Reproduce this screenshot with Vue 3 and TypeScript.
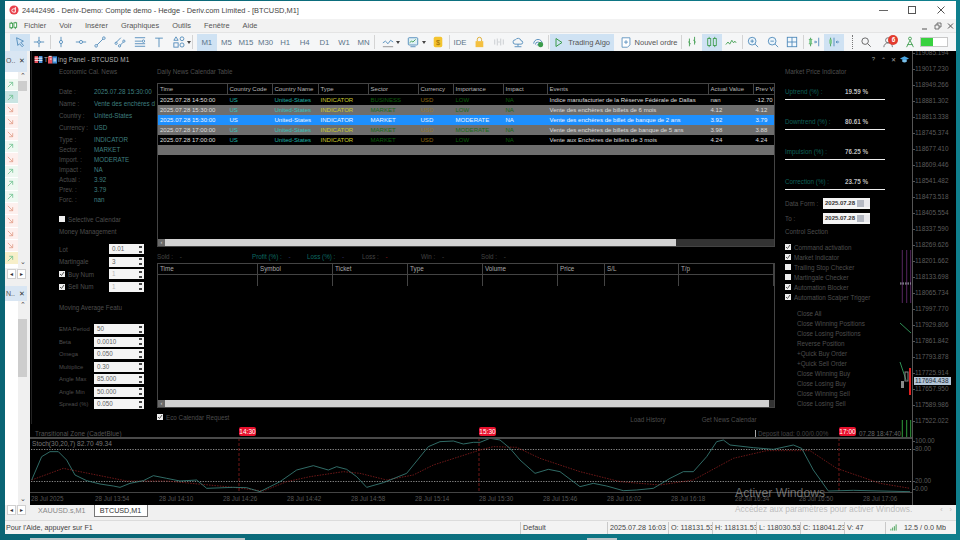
<script setup lang="ts">
const menus = ['Fichier', 'Voir', 'Insérer', 'Graphiques', 'Outils', 'Fenêtre', 'Aide']
const periods = ['M1', 'M5', 'M15', 'M30', 'H1', 'H4', 'D1', 'W1', 'MN']
const dockRows = ['u', 'us', 'd', 'd', 'd', 'u', 'd', 'u', 'u', 'u', 'd', 'd', 'd', 'd', 'uy']

const infoA = [['Date :', '2025.07.28 15:30:00'], ['Name :', 'Vente des enchères d'], ['Country :', 'United-States'], ['Currency :', 'USD']]
const infoB = [['Type :', 'INDICATOR'], ['Sector :', 'MARKET'], ['Import. :', 'MODERATE'], ['Impact :', 'NA'], ['Actual :', '3.92'], ['Prev. :', '3.79'], ['Forc. :', 'nan']]
const money = [
  { label: 'Lot', value: '0.01', check: false, dim: false },
  { label: 'Martingale', value: '3', check: false, dim: false },
  { label: 'Buy Num', value: '1', check: true, dim: true },
  { label: 'Sell Num', value: '1', check: true, dim: true },
]
const ma = [['EMA Period', '50'], ['Beta', '0.0010'], ['Omega', '0.050'], ['Multiplice', '0.30'], ['Angle Max', '85.000'], ['Angle Min', '50.000'], ['Spread (%)', '0.050']]

const newsHead = ['Time', 'Country Code', 'Country Name', 'Type', 'Sector', 'Currency', 'Importance', 'Impact', 'Events', 'Actual Value', 'Prev Val']
const news = [
  { cls: 'black', c: ['2025.07.28 14:50:00', 'US', 'United-States', 'INDICATOR', 'BUSINESS', 'USD', 'LOW', 'NA', 'Indice manufacturier de la Réserve Fédérale de Dallas', 'nan', '-12.70'], imp: 'low' },
  { cls: 'gray', c: ['2025.07.28 15:30:00', 'US', 'United-States', 'INDICATOR', 'MARKET', 'USD', 'LOW', 'NA', 'Vente des enchères de billets de 6 mois', '4.12', '4.12'], imp: 'low' },
  { cls: 'blue', c: ['2025.07.28 15:30:00', 'US', 'United-States', 'INDICATOR', 'MARKET', 'USD', 'MODERATE', 'NA', 'Vente des enchères de billet de banque de 2 ans', '3.92', '3.79'], imp: 'mod' },
  { cls: 'gray', c: ['2025.07.28 17:00:00', 'US', 'United-States', 'INDICATOR', 'MARKET', 'USD', 'MODERATE', 'NA', 'Vente des enchères de billets de banque de 5 ans', '3.98', '3.88'], imp: 'mod' },
  { cls: 'black', c: ['2025.07.28 17:00:00', 'US', 'United-States', 'INDICATOR', 'MARKET', 'USD', 'LOW', 'NA', 'Vente aux Enchères de billets de 3 mois', '4.24', '4.24'], imp: 'low' },
]
const colCls = ['time', 'cc', 'cc', 'ty', 'se', 'cu', 'im', 'ip', 'ev', 'ev', 'ev']
const summary = [
  { t: 'Sold :', v: '-', c: 'grey' }, { t: 'Profit (%) :', v: '-', c: 'teal' }, { t: 'Loss (%) :', v: '-', c: 'teal' },
  { t: 'Loss :', v: '-', c: 'red' }, { t: 'Win :', v: '-', c: 'grey' }, { t: 'Sold :', v: '-', c: 'grey' },
]
const orderHead = ['Time', 'Symbol', 'Ticket', 'Type', 'Volume', 'Price', 'S/L', 'T/p']

const metrics = [['Uptrend (%) :', '19.59 %'], ['Downtrend (%) :', '80.61 %'], ['Impulsion (%) :', '76.25 %'], ['Correction (%) :', '23.75 %']]
const checks: [string, boolean][] = [['Command activation', true], ['Market Indicator', true], ['Trailing Stop Checker', false], ['Martingale Checker', false], ['Automation Blocker', true], ['Automation Scalper Trigger', true]]
const actions = ['Close All', 'Close Winning Positions', 'Close Losing Positions', 'Reverse Position', '+Quick Buy Order', '+Quick Sell Order', 'Close Winning Buy', 'Close Losing Buy', 'Close Winning Sell', 'Close Losing Sell']

const prices = ['119085.194', '119017.230', '118949.266', '118881.302', '118813.338', '118745.374', '118677.410', '118609.446', '118541.482', '118473.518', '118405.554', '118337.590', '118269.626', '118201.662', '118133.698', '118065.734', '117997.770', '117929.806', '117861.842', '117793.878', '117725.914', '117657.950', '117589.986', '117522.022']
const times = ['28 Jul 2025', '28 Jul 13:54', '28 Jul 14:10', '28 Jul 14:26', '28 Jul 14:42', '28 Jul 14:58', '28 Jul 15:14', '28 Jul 15:30', '28 Jul 15:46', '28 Jul 16:02', '28 Jul 16:18', '28 Jul 16:34', '28 Jul 16:50', '28 Jul 17:06']

const toPts = (a: number[][], ox: number) => a.map(([x, y]) => `${ox + x / 3},${410 + y / 3}`).join(' ')
const greenLine = toPts([[95, 210], [125, 140], [150, 125], [175, 125], [200, 150], [225, 195], [260, 212], [300, 222], [340, 228], [360, 232], [390, 220], [430, 212], [460, 197], [500, 205], [540, 213], [590, 210], [620, 235], [700, 232], [740, 233], [780, 245], [840, 215], [890, 180], [940, 167], [985, 180], [1010, 170], [1040, 178], [1070, 200], [1100, 232], [1150, 218], [1220, 190], [1285, 110], [1320, 95], [1360, 93], [1390, 102], [1420, 97], [1440, 97]], 0)
  + ' ' + toPts([[30, 85], [60, 90], [90, 115], [120, 150], [165, 190], [205, 178], [240, 185], [300, 230], [340, 220], [380, 228], [430, 242], [470, 240], [520, 235], [570, 205], [610, 185], [640, 185], [680, 140], [710, 95], [730, 90], [750, 105], [820, 113], [880, 118], [940, 105], [965, 115], [1000, 180], [1045, 243], [1120, 241], [1290, 245]], 480)
const redLine = toPts([[95, 210], [190, 175], [250, 187], [380, 213], [500, 213], [700, 232], [790, 243], [860, 215], [930, 200], [1030, 185], [1080, 190], [1160, 210], [1240, 195], [1300, 165], [1440, 120]], 0)
  + ' ' + toPts([[40, 110], [110, 112], [180, 145], [300, 185], [420, 215], [540, 225], [640, 210], [760, 145], [860, 122], [990, 122], [1070, 175], [1200, 220], [1290, 235]], 480)
</script>

<template>
  <div class="desk">
    <div class="win">
      <header class="titlebar">
        <svg class="applogo" viewBox="0 0 12 12"><circle cx="6" cy="6" r="5.5" fill="#e8404a" /><path d="M7.6 2.6v6H5.4a2 2 0 1 1 0-4h2" fill="none" stroke="#fff" stroke-width="1.2" /></svg>
        <span class="wintitle">24442496 - Deriv-Demo: Compte demo - Hedge - Deriv.com Limited - [BTCUSD,M1]</span>
        <div class="winbtns">
          <svg viewBox="0 0 29 12"><path d="M10 6.5h9" stroke="#666" /></svg>
          <svg viewBox="0 0 29 12"><rect x="10.500" y="2.500" width="7" height="7" fill="none" stroke="#555" /></svg>
          <svg viewBox="0 0 29 12"><path d="M10.500 2.500l7 7m0-7l-7 7" stroke="#555" /></svg>
        </div>
      </header>

      <nav class="menubar">
        <svg class="mtlogo" viewBox="0 0 10 10"><path d="M2.500 1v8M7 1v8" stroke="#3a9b4a" /><rect x="1" y="2.500" width="3" height="5" fill="#fff" stroke="#3a9b4a" /><rect x="5.500" y="2" width="3" height="5" fill="#fff" stroke="#3a9b4a" /></svg>
        <span v-for="m in menus" :key="m">{{ m }}</span>
        <div class="mdibtns">
          <svg viewBox="0 0 36 10"><path d="M3 8h5" stroke="#555" /><path d="M16 4h4v4h-4zM18 4V2h4v4h-2" fill="none" stroke="#555" stroke-width=".8" /><path d="M29 2.500l5 5m0-5l-5 5" stroke="#555" /></svg>
        </div>
      </nav>

      <div class="toolbar">
        <button class="tb on"><svg viewBox="0 0 14 14"><path d="M3 2l8 4-3 1.500L11 11l-1.500 1.500L6.500 9 4.500 11z" fill="none" stroke="#4a86b8" /></svg></button>
        <button class="tb"><svg viewBox="0 0 14 14"><path d="M7 1v12M1 7h12" stroke="#4a86b8" /><circle cx="7" cy="7" r="1.500" fill="#fff" stroke="#4a86b8" /></svg></button>
        <i class="sep"></i>
        <button class="tb"><svg viewBox="0 0 14 14"><path d="M7 1v12" stroke="#4a86b8" /><circle cx="7" cy="7" r="1.800" fill="#fff" stroke="#4a86b8" /></svg></button>
        <button class="tb"><svg viewBox="0 0 14 14"><path d="M1 7h12" stroke="#4a86b8" /><circle cx="7" cy="7" r="1.800" fill="#fff" stroke="#4a86b8" /></svg></button>
        <button class="tb"><svg viewBox="0 0 14 14"><path d="M3 11L11 3" stroke="#4a86b8" /><circle cx="2.500" cy="11.500" r="1.500" fill="#fff" stroke="#4a86b8" /><circle cx="11.500" cy="2.500" r="1.500" fill="#fff" stroke="#4a86b8" /></svg></button>
        <button class="tb"><svg viewBox="0 0 14 14"><path d="M2 8l6-6M6 12l6-6" stroke="#4a86b8" /><circle cx="2.500" cy="8.500" r="1.300" fill="#fff" stroke="#4a86b8" /><circle cx="6.500" cy="11.500" r="1.300" fill="#fff" stroke="#4a86b8" /><circle cx="11.500" cy="6" r="1.300" fill="#fff" stroke="#4a86b8" /></svg></button>
        <button class="tb"><svg viewBox="0 0 14 14"><path d="M1 2h12M1 6h8M1 9h12M1 12h12" stroke="#4a86b8" /><circle cx="11" cy="6" r="1.400" fill="#fff" stroke="#4a86b8" /></svg></button>
        <button class="tb"><svg viewBox="0 0 14 14"><path d="M2.500 2.500h9M7 2.500V13" fill="none" stroke="#4a86b8" /></svg></button>
        <button class="tb"><svg viewBox="0 0 14 14"><path d="M3.500 1L6 5H1z" fill="none" stroke="#4a86b8" /><circle cx="10.500" cy="3.200" r="2.200" fill="none" stroke="#4a86b8" /><rect x="1" y="8" width="5" height="5" fill="none" stroke="#4a86b8" /><circle cx="10.500" cy="10.500" r="2.400" fill="none" stroke="#4a86b8" /></svg></button>
        <i class="caret tight"></i>
        <i class="sep sp2"></i>
        <button v-for="(p, i) in periods" :key="p" class="tb per" :class="{ on: i === 0 }">{{ p }}</button>
        <i class="sep"></i>
        <button class="tb wide first"><svg viewBox="0 0 14 14"><path d="M1 8l3-2 3 3 3-4 3 2" fill="none" stroke="#4a86b8" /><path d="M1 12.500h12" stroke="#888" /></svg></button>
        <i class="caret"></i>
        <button class="tb wide"><svg viewBox="0 0 14 14"><rect x="1.500" y="2" width="11" height="8.500" rx="1" fill="#dff0f5" stroke="#4a86b8" /><path d="M3 8l2-2 2 1 3-3" fill="none" stroke="#3a9b4a" /><path d="M4 12.500h6" stroke="#4a86b8" /></svg></button>
        <i class="caret"></i>
        <button class="tb"><svg viewBox="0 0 14 14"><rect x="2" y="1" width="10" height="12" rx="2" fill="#f4c430" /><text x="7" y="10" font-size="8.500" text-anchor="middle" fill="#9a6a00" font-family="Liberation Sans">$</text></svg></button>
        <i class="sep"></i>
        <button class="tb per ide">IDE</button>
        <button class="tb"><svg viewBox="0 0 14 14"><rect x="3" y="6" width="9" height="7" fill="#f4c040" /><path d="M5 6V4a2.500 2.500 0 0 1 5 0v2" fill="none" stroke="#d9a520" /></svg></button>
        <button class="tb"><svg viewBox="0 0 14 14"><path d="M2 4v6M5 3v8M9 3v8M12 4v6M6 7h2" stroke="#c4c8cc" /></svg></button>
        <button class="tb"><svg viewBox="0 0 14 14"><path d="M3.500 9.500a2.500 2.500 0 0 1 .5-5 3.500 3.500 0 0 1 6.500 1 2 2 0 0 1 0 4zM7 9.500v2.500M3 12.500h8" fill="none" stroke="#4a86b8" /></svg></button>
        <button class="tb"><svg viewBox="0 0 14 14"><path d="M2 9a5 5 0 1 1 10 0M4 10a3 3 0 1 1 6 0M6 11a1 1 0 1 1 2 0" fill="none" stroke="#4a86b8" /><circle cx="10" cy="10" r="3" fill="#3a9b4a" /></svg></button>
        <i class="sep"></i>
        <button class="tb textbtn algo on"><svg viewBox="0 0 10 10"><path d="M2 1l6 4-6 4z" fill="none" stroke="#3a9b4a" /></svg>Trading Algo</button>
        <button class="tb textbtn ordre"><svg viewBox="0 0 12 14"><path d="M1 1h10v9l-3 3H1z" fill="#fff" stroke="#4a86b8" /><path d="M6 4v5M3.500 6.500h5" stroke="#4a86b8" /></svg>Nouvel ordre</button>
        <i class="sep"></i>
        <button class="tb"><svg viewBox="0 0 14 14"><path d="M4 3v9M2.500 7H4M4 9h1.500M10 1v9M8.500 5H10M10 7h1.500" stroke="#3a9b4a" /></svg></button>
        <button class="tb on"><svg viewBox="0 0 14 14"><rect x="2" y="3" width="3.500" height="8" fill="none" stroke="#3a9b4a" /><rect x="8.500" y="3" width="3.500" height="8" fill="none" stroke="#3a9b4a" /><path d="M3.700 1v2M3.700 11v2M10.200 1v2M10.200 11v2" stroke="#3a9b4a" /></svg></button>
        <button class="tb"><svg viewBox="0 0 14 14"><path d="M1 10l2.500-3 2 2.500L8 5l2 3 1.500-2 1.500 2" fill="none" stroke="#3a9b4a" /></svg></button>
        <i class="sep"></i>
        <button class="tb"><svg viewBox="0 0 14 14"><circle cx="6" cy="6" r="4.500" fill="#eaf4fb" stroke="#4a86b8" /><path d="M9.500 9.500l3.500 3.500M4 6h4M6 4v4" stroke="#4a86b8" /></svg></button>
        <button class="tb"><svg viewBox="0 0 14 14"><circle cx="6" cy="6" r="4.500" fill="#eaf4fb" stroke="#4a86b8" /><path d="M9.500 9.500l3.500 3.500M4 6h4" stroke="#4a86b8" /></svg></button>
        <button class="tb"><svg viewBox="0 0 14 14"><rect x="1.500" y="1.500" width="11" height="11" fill="#f3f9fd" stroke="#4a86b8" /><path d="M7 1.500v11M1.500 7h11" stroke="#4a86b8" /></svg></button>
        <i class="sep"></i>
        <button class="tb"><svg viewBox="0 0 14 14"><path d="M3 2v10M1 4h4M1 9h4" stroke="#3a9b4a" /><rect x="1.500" y="4" width="3" height="5" fill="#7cc98b" /><path d="M7 7h3M8.500 5.500L10 7l-1.500 1.500M12.500 2v10" fill="none" stroke="#4a86b8" /></svg></button>
        <button class="tb on"><svg viewBox="0 0 14 14"><path d="M3 2v10" stroke="#3a9b4a" /><rect x="1.500" y="4" width="3" height="5" fill="#7cc98b" /><path d="M7 2v10M13 7H9.500M11 5.500L9.500 7 11 8.500" fill="none" stroke="#4a86b8" /></svg></button>
        <i class="sep dots"></i>
        <button class="tb"><svg viewBox="0 0 14 14"><circle cx="6" cy="6" r="3.800" fill="none" stroke="#555" /><path d="M9 9l3.500 3.500" stroke="#555" /></svg></button>
        <button class="tb person">
          <svg viewBox="0 0 14 14"><circle cx="6" cy="5" r="3" fill="none" stroke="#666" /><path d="M1 13a5 5 0 0 1 10 0" fill="none" stroke="#666" /></svg>
          <span class="badge">6</span>
        </button>
        <button class="tb"><svg viewBox="0 0 14 14"><circle cx="7" cy="3" r="1.700" fill="none" stroke="#3a9b4a" /><path d="M7 5L3 13M7 5l4 8M4 10h6" fill="none" stroke="#3a9b4a" /></svg></button>
        <div class="sigbox"><i></i></div>
      </div>

      <div class="work">
        <aside class="dock">
          <div class="docktab">O.. <b>✕</b></div>
          <div class="docklist top">
            <div class="rows">
              <div v-for="(r, i) in dockRows" :key="i" class="drow" :class="r">
                <svg v-if="r[0] === 'u'" viewBox="0 0 8 8"><path d="M1 7l5.500-5.500M2.500 1.500h4v4" fill="none" stroke="#6cc08e" stroke-width=".9" /></svg>
                <svg v-else viewBox="0 0 8 8"><path d="M1 1l5.500 5.500M2.500 6.500h4v-4" fill="none" stroke="#e09a84" stroke-width=".9" /></svg>
              </div>
            </div>
            <div class="vscroll small"><span class="chev">⌃</span><i class="thumb"></i><span class="chev low">⌄</span></div>
          </div>
          <div class="hscroll"><span>◂</span><span>▸</span></div>
          <div class="docktab second">N.. <b>✕</b></div>
          <div class="docklist bottom">
            <div class="rows blank"></div>
            <div class="vscroll large"><span class="chev">⌃</span><i class="thumb"></i><span class="chev low">⌄</span></div>
          </div>
        </aside>

        <section class="chart">
          <div class="chart-body">
            <div class="panel">
              <div class="paneltitle">
                <svg class="flag" viewBox="0 0 9 8"><rect width="4" height="8" fill="#e85560" /><rect x="5" width="4" height="8" fill="#4a90d8" /><path d="M0 2.500h9M0 5h9" stroke="#fff" /></svg>
                <span>T</span>
                <svg class="flag2" viewBox="0 0 10 9"><rect y="1" width="5" height="8" fill="#e85560" /><rect x="5" y="1" width="5" height="8" fill="#3f8ed8" /><path d="M1 1h3" stroke="#fff" /><path d="M2 4h2M6 4h3M6 6h3" stroke="#fff" /></svg>
                <span>ing Panel - BTCUSD M1</span>
                <div class="panelctl">
                  <span>?</span><span>⌃</span><span>✕</span>
                  <svg viewBox="0 0 10 9"><path d="M0 3.500L5 1l5 2.500L5 6z" fill="#4aa4e0" /><path d="M2.500 5v2c1.500 1 3.500 1 5 0V5" fill="#7ac0ea" /></svg>
                </div>
              </div>
              <div class="panelbody">
                <div class="colL">
                  <div class="lbl head">Economic Cal. News</div>
                  <div class="infoA">
                    <div v-for="r in infoA" :key="r[0]" class="info tall"><span class="lbl ilbl">{{ r[0] }}</span><span class="val">{{ r[1] }}</span></div>
                  </div>
                  <div class="infoB">
                    <div v-for="r in infoB" :key="r[0]" class="info"><span class="lbl ilbl">{{ r[0] }}</span><span class="val">{{ r[1] }}</span></div>
                  </div>
                  <label class="chk selcal"><span class="cb"></span><span class="lbl">Selective Calendar</span></label>
                  <div class="lbl head mm">Money Management</div>
                  <div class="mrows">
                    <div v-for="r in money" :key="r.label" class="mrow">
                      <span class="chk">
                        <span v-if="r.check" class="cb"><svg viewBox="0 0 6 6"><path d="M1 3l1.500 1.500L5 1" fill="none" stroke="#444" stroke-width=".9" /></svg></span>
                        <span class="lbl">{{ r.label }}</span>
                      </span>
                      <span class="spin short" :class="{ dim: r.dim }">{{ r.value }}<i class="arrows"></i></span>
                    </div>
                  </div>
                  <div class="lbl head maf">Moving Average Featu</div>
                  <div class="marows">
                    <div v-for="r in ma" :key="r[0]" class="mrow">
                      <span class="lbl">{{ r[0] }}</span>
                      <span class="spin">{{ r[1] }}<i class="arrows"></i></span>
                    </div>
                  </div>
                </div>

                <div class="colC">
                  <div class="lbl head">Daily News Calendar Table</div>
                  <div class="news">
                    <div class="nrow nhead"><span v-for="h in newsHead" :key="h">{{ h }}</span></div>
                    <div v-for="(n, i) in news" :key="i" class="nrow" :class="n.cls">
                      <span v-for="(c, j) in n.c" :key="j" :class="[colCls[j], j === 6 ? n.imp : '']">{{ c }}</span>
                    </div>
                    <div class="nrow gray empty"></div>
                    <div class="tfill"></div>
                    <div class="hbar"><i class="hbtn">‹</i><i class="hthumb"></i></div>
                  </div>
                  <div class="summary">
                    <span v-for="(s, i) in summary" :key="i" class="sm" :class="s.c">{{ s.t }} <em>{{ s.v }}</em></span>
                  </div>
                  <div class="orders">
                    <div class="orow ohead"><span v-for="h in orderHead" :key="h">{{ h }}</span></div>
                    <div class="orow oempty"><span v-for="h in orderHead" :key="h"></span></div>
                    <div class="tfill"></div>
                    <div class="hbar full"><i class="hbtn">‹</i><i class="hthumb"></i></div>
                  </div>
                  <div class="eco">
                    <label class="chk"><span class="cb"><svg viewBox="0 0 6 6"><path d="M1 3l1.500 1.500L5 1" fill="none" stroke="#444" stroke-width=".9" /></svg></span><span class="lbl">Eco Calendar Request</span></label>
                    <span class="lbl hist">Load History</span>
                    <span class="lbl getnews">Get News Calendar</span>
                  </div>
                </div>

                <div class="colR">
                  <div class="lbl head">Market Price Indicator</div>
                  <div class="metrics">
                    <div v-for="m in metrics" :key="m[0]" class="metric"><span class="mlabel">{{ m[0] }}</span><span class="mval">{{ m[1] }}</span></div>
                  </div>
                  <div class="daterow df"><span class="lbl">Data Form :</span><span class="date">2025.07.28<i class="cal"></i></span></div>
                  <div class="daterow"><span class="lbl">To :</span><span class="date">2025.07.28<i class="cal"></i></span></div>
                  <div class="lbl head cs">Control Section</div>
                  <div class="checks">
                    <label v-for="c in checks" :key="c[0]" class="chk rowchk">
                      <span class="cb"><svg v-if="c[1]" viewBox="0 0 6 6"><path d="M1 3l1.500 1.500L5 1" fill="none" stroke="#444" stroke-width=".9" /></svg></span><span class="lbl">{{ c[0] }}</span>
                    </label>
                  </div>
                  <div class="actions"><span v-for="a in actions" :key="a" class="lbl">{{ a }}</span></div>
                </div>
              </div>
            </div>

            <div class="strip">
              <span class="tz">Transitional Zone (CadetBlue)</span>
              <span class="deposit">Deposit load: 0.00/0.00%</span>
              <span class="stamp">07.28 18:47:40</span>
            </div>
            <span class="tag t1">14:30</span>
            <span class="tag t2">15:30</span>
            <span class="tag t3">17:00</span>

            <svg class="candles" viewBox="895 240 17 197">
              <path d="M902.300 250v53M906.700 250v53M910.700 250v53" stroke="#55265f" />
              <path d="M900 283h11M900 284h11" stroke="#9a9aa8" stroke-dasharray="1.500 1" />
              <path d="M900 323l11 10M900 362l6 18" stroke="#2f8f55" />
              <rect x="905" y="372" width="3" height="9" fill="none" stroke="#8a8a8a" />
              <rect x="901" y="381" width="3" height="7" fill="#8a8a8a" />
              <path d="M910 368v27" stroke="#e02020" stroke-width="2" />
              <path d="M902.300 420v17M906.700 420v17M910.700 420v17" stroke="#2f9a3a" />
            </svg>

            <div class="stochsep"></div>
            <div class="stoch">
              <span class="stochlbl">Stoch(30,20,7) 82.70 49.34</span>
              <svg viewBox="30 438 882 55" width="882" height="55">
                <path d="M31 449.500H912M31 481.500H912" stroke="#a8a8a8" stroke-width=".8" stroke-dasharray="1.300 1.300" />
                <path d="M239 438V491M479 438V491M839 438V491" stroke="#8e1c1c" stroke-width=".8" stroke-dasharray="3 2" />
                <polyline :points="redLine" fill="none" stroke="#8a1e1e" stroke-width=".8" stroke-dasharray="1.500 1.200" />
                <polyline :points="greenLine" fill="none" stroke="#3c8780" stroke-width=".8" />
              </svg>
            </div>
            <div class="timeaxis"><span v-for="t in times" :key="t">{{ t }}</span></div>
          </div>

          <div class="axis">
            <div v-for="p in prices" :key="p" class="price">{{ p }}</div>
            <div class="price s1">100.00</div>
            <div class="price s2">80.00</div>
            <div class="price s3">20.00</div>
            <div class="price s2">0.00</div>
            <span class="pricetag">117694.438</span>
          </div>
        </section>
      </div>

      <div class="tabs">
        <div class="hscroll tabscroll"><span>◂</span><span>▸</span></div>
        <span class="tab">XAUUSD.s,M1</span>
        <span class="tab active">BTCUSD,M1</span>
        <span class="tabarrows"><i>‹</i><i>›</i></span>
      </div>

      <footer class="status">
        <span class="st help">Pour l'Aide, appuyer sur F1</span>
        <span class="st deflt">Default</span>
        <span class="st dt">2025.07.28 16:03</span>
        <span class="st ohlc">O: 118131.53</span>
        <span class="st ohlc">H: 118131.53</span>
        <span class="st ohlc">L: 118030.53</span>
        <span class="st ohlc">C: 118041.23</span>
        <span class="st vol">V: 47</span>
        <span class="st net"><svg viewBox="0 0 8 7"><path d="M1 7V5M3 7V3.500M5 7V2M7 7V0" stroke="#3a9b4a" /></svg>12.5 / 0.0 Mb</span>
      </footer>
    </div>

    <div class="watermark">
      <div class="wm1">Activer Windows</div>
      <div class="wm2">Accédez aux paramètres pour activer Windows.</div>
    </div>
    <i class="peek p1"></i>
    <i class="peek p2"></i>
  </div>
</template>

<style>
html, body { margin: 0; background: #0c5563; }
</style>

<style scoped>
* { box-sizing: border-box; }
.desk { position: relative; width: 960px; height: 540px; overflow: hidden; background: linear-gradient(90deg, #0a6474 0 5px, #0f7f8d 955px); padding: 1px 4px 6px 5px; font-family: "Liberation Sans", Arial, sans-serif; }
.win { height: 533px; display: flex; flex-direction: column; background: #f0f0f0; }
.peek { position: absolute; bottom: 0; height: 2px; background: #b8c4c8; }
.p1 { left: 30px; width: 215px; }
.p2 { left: 587px; width: 30px; }

.titlebar { height: 18px; background: #fff; display: flex; align-items: center; padding-left: 4px; flex: none; }
.applogo { width: 10px; height: 10px; margin-right: 3px; }
.wintitle { font-size: 7.420px; color: #444; white-space: nowrap; }
.winbtns { margin-left: auto; display: flex; }
.winbtns svg { width: 29px; height: 12px; }

.menubar { height: 13px; background: #f2f2f2; display: flex; align-items: center; gap: 13px; padding-left: 19px; font-size: 7.400px; color: #555; position: relative; flex: none; }
.mtlogo { width: 9px; height: 9px; position: absolute; left: 4px; top: 2px; }
.mdibtns { margin-left: auto; margin-right: 1px; display: flex; }
.mdibtns svg { width: 36px; height: 10px; }

.toolbar { height: 19px; background: #f5f6f7; display: flex; align-items: center; padding-left: 5px; border-top: 1px solid #e4e4e4; flex: none; }
.tb { all: unset; box-sizing: border-box; width: 19.600px; height: 17px; display: flex; align-items: center; justify-content: center; flex: none; color: #5a7388; font: 7.800px "Liberation Sans", Arial, sans-serif; }
.tb svg { width: 12px; height: 12px; }
.tb.on { background: #cfe2f3; }
.tb.wide { width: 14px; margin-left: 3px; }
.tb.wide.first { margin-left: 5px; }
.per { letter-spacing: -.1px; }
.ide { width: 19px; }
.sep { width: 1px; height: 14px; background: #d4d4d4; margin: 0 .65px; flex: none; }
.sep.sp2 { margin: 0 4px 0 1.300px; }
.sep.dots { background: none; border-left: 1px dotted #777; margin: 0 3.200px 0 8.500px; }
.caret { width: 0; height: 0; border: 2.500px solid transparent; border-top: 3.500px solid #444; border-bottom: 0; margin: 0 3px 0 1.500px; flex: none; }
.caret.tight { margin: 0 0 0 -2px; }
.textbtn { gap: 4px; width: auto; color: #555; font-size: 7.500px; }
.textbtn svg { width: 10px; height: 11px; }
.algo { width: 64px; }
.ordre { width: 62px; margin-left: 4px; }
.person { position: relative; margin: 0 2px 0 2.900px; }
.badge { position: absolute; right: 0; top: 1px; width: 10px; height: 10px; border-radius: 50%; background: #e23b2e; color: #fff; font-size: 6.500px; font-weight: 700; text-align: center; line-height: 10px; }
.sigbox { width: 28px; height: 10px; background: #fff; border: 1px solid #c8c8c8; }
.sigbox i { display: block; width: 12px; height: 100%; background: #38d13f; }

.work { flex: none; display: flex; height: 454px; }
.dock { width: 25px; flex: none; display: flex; flex-direction: column; background: #f0f0f0; padding-right: 3px; }
.docktab { height: 21px; background: #d9e6f3; font-size: 7px; color: #555; padding: 6px 0 0 1px; white-space: nowrap; display: flex; justify-content: space-between; flex: none; }
.docktab b { font-weight: 400; margin-right: 2px; font-size: 7px; color: #333; }
.docktab.second { height: 15px; margin-top: 7px; padding-top: 4px; }
.docklist { display: flex; background: #fff; flex: none; }
.docklist.top { height: 196px; }
.docklist.bottom { height: 204px; }
.rows { width: 13px; padding-top: 7px; }
.rows.blank { padding: 0; }
.drow { height: 12.400px; display: flex; align-items: center; padding-left: 2px; background: #fdf0ee; border-bottom: 1px solid #fff; }
.drow svg { width: 7px; height: 7px; }
.drow.u { background: #eef8f1; }
.drow.us { background: #c9e4e2; }
.drow.uy { background: #f7efc9; }
.vscroll { width: 9px; background: #f0f0f0; position: relative; display: flex; flex-direction: column; align-items: center; }
.chev { font-size: 7px; line-height: 7px; height: 9px; color: #444; }
.chev.low { margin-top: auto; height: 10px; }
.thumb { display: block; width: 9px; background: #cdcdcd; }
.small .thumb { height: 10px; }
.large .thumb { height: 58px; margin-top: 9px; }
.hscroll { height: 10px; margin-top: 1px; display: flex; gap: 1px; padding-left: 2px; background: #f0f0f0; flex: none; }
.hscroll span { width: 9px; font-size: 6px; line-height: 8px; text-align: center; border: 1px solid #d0d0d0; background: #fff; color: #333; }

.chart { flex: 1; display: flex; background: #000; min-width: 0; }
.chart-body { width: 882px; flex: none; position: relative; display: flex; flex-direction: column; }
.panel { height: 373px; flex: none; margin-left: 1px; border-left: 1px solid #222; display: flex; flex-direction: column; font-size: 6.300px; overflow: hidden; background: #000; }
.paneltitle { height: 16px; display: flex; align-items: center; color: #b4b4b4; font-size: 6.400px; padding-left: 2px; letter-spacing: .1px; flex: none; }
.flag { width: 9px; height: 7px; margin-right: 1px; }
.flag2 { width: 9px; height: 9px; margin: 0 1px 0 0; }
.panelctl { margin-left: auto; display: flex; gap: 5px; align-items: center; margin-right: 3px; color: #a0a0a0; font-size: 6px; }
.panelctl span { width: 5px; text-align: center; }
.panelctl svg { width: 9px; height: 9px; margin-left: -1px; }
.panelbody { display: flex; flex: 1; min-height: 0; }

.lbl { color: #4d4d4d; white-space: nowrap; }
.head { height: 10px; line-height: 10px; }
.val { color: #3f7f7f; white-space: nowrap; }
.colL { width: 124px; padding-left: 27px; flex: none; overflow: hidden; }
.infoA { margin-top: 8px; }
.info { height: 10px; display: flex; align-items: center; }
.info.tall { height: 12.250px; }
.ilbl { width: 35px; flex: none; }
.selcal { margin-top: 10px; }
.chk { display: flex; align-items: center; gap: 3px; height: 10px; }
.cb { width: 6px; height: 6px; background: #eee; flex: none; display: block; }
.cb svg { display: block; width: 6px; height: 6px; }
.mm { margin-top: 3px; }
.mrows { margin-top: 6px; width: 85px; }
.mrow { height: 12.500px; display: flex; align-items: center; justify-content: space-between; }
.spin { width: 50px; height: 10px; background: #f4f4f4; color: #666; font-size: 6.300px; line-height: 10px; padding-left: 3px; position: relative; flex: none; }
.spin.short { width: 35px; }
.spin.dim { color: #b8b8b8; }
.arrows { position: absolute; right: 2px; top: 1.500px; width: 3px; height: 7px; background: linear-gradient(#444 0 2px, transparent 2px 5px, #444 5px); }
.maf { margin-top: 10px; }
.marows { margin-top: 10px; width: 85px; }
.marows .lbl { font-size: 5.800px; }

.colC { width: 618px; margin-left: 1px; flex: none; }
.news { height: 164px; margin-top: 6px; border: 1px solid #444; display: flex; flex-direction: column; overflow: hidden; }
.nrow { display: grid; grid-template-columns: 69.500px 45px 46px 50px 50px 35px 50px 44px 161px 45px 22px; height: 10px; line-height: 10px; white-space: nowrap; flex: none; font-size: 6.050px; }
.nrow span { padding-left: 2px; overflow: hidden; color: #ddd; }
.nhead { height: 10.500px; border-bottom: 1px solid #444; }
.nhead span { border-right: 1px solid #444; color: #b8b8b8; }
.nrow .cc { color: #20b2aa; }
.nrow .ty { color: #c9c92e; }
.nrow .se, .nrow .im, .nrow .ip { color: #0c5f0c; }
.nrow .cu { color: #8f6a12; }
.nrow .mod { color: #c9c92e; }
.nrow .ev { color: #dcdcdc; }
.gray { background: #6e6e6e; }
.gray .cc { color: #39c2bb; }
.gray .cu { color: #927a2e; }
.gray .se, .gray .im, .gray .ip { color: #1a6a1a; }
.blue { background: #1e90ff; }
.blue span, .blue .cc, .blue .ty, .blue .se, .blue .cu, .blue .ip, .blue .mod, .blue .ev { color: #f0f6ff; }
.empty { flex: none; }
.tfill { flex: 1; }
.hbar { height: 7px; display: flex; background: #333; flex: none; }
.hbtn { width: 7px; background: #6a6a6a; color: #ddd; font-style: normal; font-size: 6px; line-height: 6px; text-align: center; }
.hthumb { width: 511px; background: #d2d2d2; }
.hbar.full .hthumb { width: 604px; }
.summary { height: 10px; margin: 5px 0 1px; display: grid; grid-template-columns: 95px 55px 55px 59px 60px 1fr; line-height: 10px; white-space: nowrap; }
.sm { color: #444; }
.sm em { font-style: normal; margin-left: 5px; }
.sm.teal { color: #0d6a62; }
.sm.teal em { color: #336; }
.sm.red em { color: #8a1f1f; }
.orders { height: 145px; border: 1px solid #444; display: flex; flex-direction: column; overflow: hidden; }
.orow { display: grid; grid-template-columns: 100px 75px 75px 75px 75px 47px 74px 1fr; height: 10.500px; flex: none; }
.orow span { border-right: 1px solid #444; padding-left: 2px; line-height: 10px; color: #a8a8a8; }
.ohead { border-bottom: 1px solid #444; }
.oempty { height: 11px; }
.eco { height: 10px; margin-top: 4px; display: flex; align-items: center; }
.hist { margin-left: 401px; margin-top: 4px; }
.getnews { margin-left: 36px; margin-top: 4px; }

.colR { width: 120px; margin-left: 10px; flex: none; }
.metric { height: 14px; border-bottom: 1px solid #eee; display: flex; align-items: center; margin-bottom: 16px; width: 100px; padding-bottom: 3px; }
.metrics { margin-top: 9px; }
.mlabel { width: 60px; color: #0f6158; white-space: nowrap; }
.mval { color: #bdbdbd; font-weight: 700; }
.daterow { height: 10.500px; display: flex; align-items: center; margin-top: 4.500px; }
.daterow.df { margin-top: -8px; }
.daterow .lbl { width: 38px; }
.date { width: 47px; height: 10.500px; background: #f4f4f4; color: #333; line-height: 10.500px; padding-left: 2px; position: relative; font-weight: 700; font-size: 6px; }
.cal { position: absolute; right: 0; top: 1.500px; width: 13px; height: 7.500px; background: linear-gradient(90deg, #b4b8c2 0 7px, #e8e8ec 7px); }
.cs { margin-top: 3.500px; }
.checks { margin-top: 5px; }
.rowchk { height: 10px; }
.actions { margin: 7px 0 0 12px; display: flex; flex-direction: column; }
.actions span { height: 10px; line-height: 10px; }

.strip { height: 13px; font-size: 6.300px; color: #555; flex: none; display: grid; grid-template-columns: 725px 104px auto; align-items: end; white-space: nowrap; }
.tz { margin-left: 5px; letter-spacing: .1px; }
.deposit { border-left: 1px solid #aaa; padding-left: 2px; color: #444; }
.stamp { color: #666; }
.tag { position: absolute; top: 376px; width: 17px; height: 9px; border-radius: 2px; background: #e8112d; color: #fff; font-size: 6.500px; line-height: 9px; text-align: center; }
.t1 { left: 209px; }
.t2 { left: 449px; }
.t3 { left: 809px; }
.candles { position: absolute; left: 865px; top: 189px; width: 17px; height: 197px; }
.stochsep { height: 2px; background: #4a4a4a; flex: none; }
.stoch { height: 54px; position: relative; flex: none; overflow: hidden; border-bottom: 1px solid #444; }
.stoch svg { position: absolute; left: 0; top: -1px; display: block; }
.stochlbl { position: absolute; left: 2px; top: 1px; font-size: 6.600px; color: #777; z-index: 1; }
.timeaxis { height: 12px; display: grid; grid-template-columns: repeat(14, 64px); font-size: 6.300px; color: #555; line-height: 12px; padding-left: 1px; white-space: nowrap; flex: none; }

.axis { flex: 1; border-left: 1px solid #555; overflow: hidden; position: relative; }
.price { height: 16px; line-height: 16px; padding-left: 2px; font-size: 6.450px; color: #5c5c5c; white-space: nowrap; position: relative; }
.price::before { content: ""; position: absolute; left: 0; top: 50%; width: 1.500px; height: 1px; background: #555; }
.price:first-child { margin-top: -6px; }
.price.s1 { height: 8px; line-height: 8px; margin-top: 8px; }
.price.s2 { height: 8px; line-height: 8px; }
.price.s3 { height: 8px; line-height: 8px; margin-top: 24px; }
.pricetag { position: absolute; left: 1px; top: 326px; width: 37px; height: 8px; background: #b4c6d8; color: #1d2a36; font-size: 6.450px; line-height: 8px; padding-left: 1px; }

.tabs { height: 13px; display: flex; align-items: flex-start; font-size: 7.200px; color: #888; flex: none; }
.tabscroll { width: 22px; margin: 0 11px 0 0; }
.tab { line-height: 11px; }
.tab.active { margin-left: 8px; width: 54px; height: 12px; background: #fff; border: 1px solid #777; border-top: 0; color: #333; text-align: center; }
.tabarrows { margin-left: auto; margin-right: 4px; display: flex; gap: 7px; color: #bbb; }
.tabarrows i { font-style: normal; }

.status { height: 14px; margin-top: 2px; background: #f3f3f3; border-top: 1px solid #dcdcdc; display: flex; align-items: center; font-size: 7.200px; color: #444; white-space: nowrap; flex: none; }
.st { height: 12px; line-height: 12px; border-left: 1px solid #c9c9c9; padding-left: 2px; overflow: hidden; flex: none; }
.help { width: 515px; border-left: 0; padding-left: 1px; }
.deflt { width: 87px; }
.dt { width: 61px; }
.ohlc { width: 44px; }
.vol { width: 41px; }
.net { display: flex; align-items: center; padding-left: 4px; gap: 7px; }
.net svg { width: 7px; height: 7px; }

.watermark { position: absolute; left: 735px; top: 485px; pointer-events: none; white-space: nowrap; }
.wm1 { font-size: 12.200px; line-height: 16px; color: rgba(210, 210, 210, .5); }
.wm2 { font-size: 8.400px; line-height: 12px; margin-top: 2px; color: rgba(170, 170, 170, .75); }
</style>
